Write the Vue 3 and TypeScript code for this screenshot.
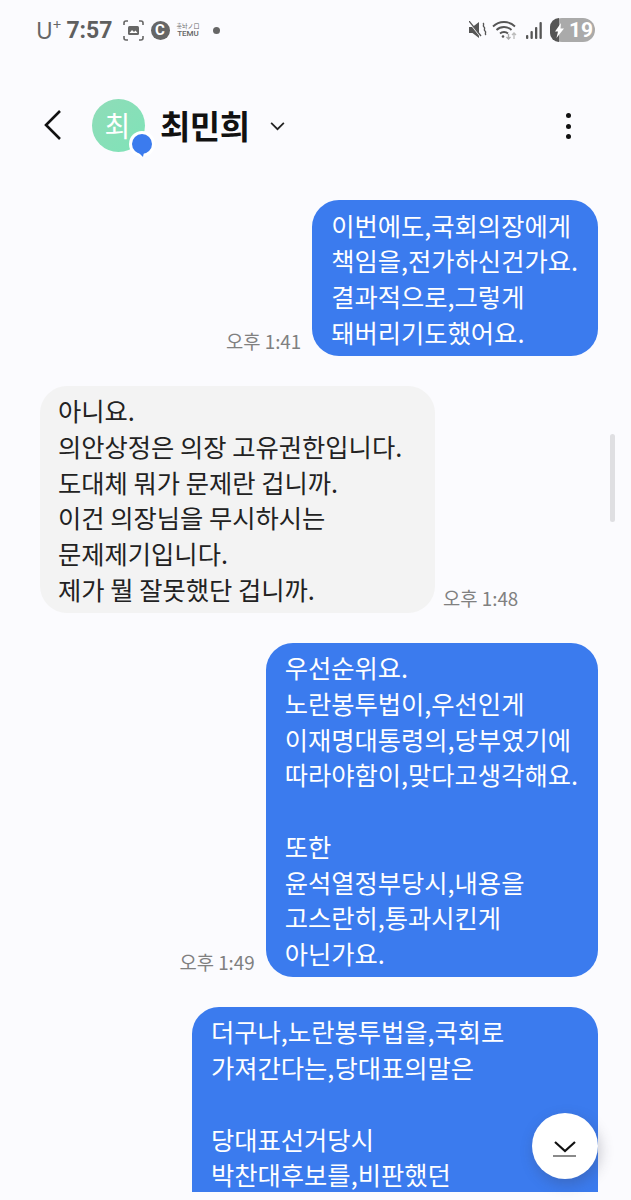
<script setup lang="ts">
interface Message {
  id: number
  mine: boolean
  time: string
  lines: string[]
  cut?: boolean
}

const messages: Message[] = [
  { id: 1, mine: true, time: '오후 1:41', lines: ['이번에도,국회의장에게', '책임을,전가하신건가요.', '결과적으로,그렇게', '돼버리기도했어요.'] },
  { id: 2, mine: false, time: '오후 1:48', lines: ['아니요.', '의안상정은 의장 고유권한입니다.', '도대체 뭐가 문제란 겁니까.', '이건 의장님을 무시하시는', '문제제기입니다.', '제가 뭘 잘못했단 겁니까.'] },
  { id: 3, mine: true, time: '오후 1:49', lines: ['우선순위요.', '노란봉투법이,우선인게', '이재명대통령의,당부였기에', '따라야함이,맞다고생각해요.', '', '또한', '윤석열정부당시,내용을', '고스란히,통과시킨게', '아닌가요.'] },
  { id: 4, mine: true, time: '', cut: true, lines: ['더구나,노란봉투법을,국회로', '가져간다는,당대표의말은', '', '당대표선거당시', '박찬대후보를,비판했던'] },
]
</script>

<template>
  <div class="phone">
    <div class="status">
      <div class="status-left">
        <span class="carrier">U<sup>+</sup></span>
        <span class="clock">7:57</span>
        <svg class="ic-shot" width="21" height="21" viewBox="0 0 21 21" fill="none" stroke="#666" stroke-width="1.6">
          <path d="M1 5V3a2 2 0 0 1 2-2h2M16 1h2a2 2 0 0 1 2 2v2M20 16v2a2 2 0 0 1-2 2h-2M5 20H3a2 2 0 0 1-2-2v-2" />
          <rect x="5" y="6" width="11" height="9" rx="1.5" fill="#666" stroke="none" />
          <path d="M6.5 13l2.5-3 2 2 1.5-1.500 2 2.500z" fill="#fff" stroke="none" />
        </svg>
        <span class="c-badge">C</span>
        <span class="temu"><i>홍놔ノ口</i><b>TEMU</b></span>
        <span class="dot"></span>
      </div>
      <div class="status-right">
        <svg class="mute" width="18" height="18" viewBox="0 0 18 18" fill="#555">
          <path d="M0 6h3.500L10 1v16l-6.500-5H0z" />
          <path d="M0 1l12 15" stroke="#fbfbfe" stroke-width="1.500" />
          <path d="M0 0l12 15" stroke="#555" stroke-width="1.300" />
          <path d="M14 2c2 1.500-1 2.500 1 4s-1 2.500 1 4-1 2.500 1 4" fill="none" stroke="#555" stroke-width="1.400" />
        </svg>
        <svg width="25" height="20" viewBox="0 0 25 20" fill="none" stroke="#555" stroke-width="1.800">
          <path d="M1 6.500c6-6 16-6 22 0M4.500 10c4-4 11-4 15 0M8 13.500c2.200-2 5.800-2 8 0" />
          <circle cx="11" cy="16.500" r="1.300" fill="#555" stroke="none" />
          <path d="M16.500 14v5M14.500 17l2 2 2-2" stroke="#aaa" stroke-width="1.300" />
          <path d="M22 19v-6M20 15l2-2 2 2" stroke="#bbb" stroke-width="1.300" />
        </svg>
        <svg class="signal" width="16" height="17" viewBox="0 0 16 17" fill="#555">
          <rect x="0" y="13" width="2.300" height="4" rx="1" />
          <rect x="4.500" y="9" width="2.300" height="8" rx="1" />
          <rect x="9" y="5" width="2.300" height="12" rx="1" />
          <rect x="13.500" y="0" width="2.300" height="17" rx="1" />
        </svg>
        <span class="battery">
          <span class="battery-fill"></span>
          <svg class="bolt" width="9" height="15" viewBox="0 0 9 15" fill="#fff"><path d="M6 0L0 8.500h3L1.500 15 9 5.500H5.500z" /></svg>
          <span class="battery-num">19</span>
        </span>
      </div>
    </div>

    <header class="head">
      <svg class="back" width="20" height="32" viewBox="0 0 20 32" fill="none" stroke="#111" stroke-width="2.600">
        <path d="M17 2L3 16l14 14" />
      </svg>
      <div class="avatar">
        <span>최</span>
        <svg class="avatar-badge" width="26" height="28" viewBox="0 0 26 28">
          <circle cx="13" cy="13" r="13" fill="#fff" />
          <circle cx="13" cy="13" r="10" fill="#3b7bee" />
          <path d="M9 21l5 5 1-5z" fill="#3b7bee" />
        </svg>
      </div>
      <span class="name">최민희</span>
      <svg class="chev" width="17" height="10" viewBox="0 0 18 11" fill="none" stroke="#222" stroke-width="1.900">
        <path d="M2 2l7 7 7-7" />
      </svg>
      <div class="more"><i></i><i></i><i></i></div>
    </header>

    <main class="thread">
      <div v-for="m in messages" :key="m.id" class="row" :class="{ mine: m.mine }">
        <span v-if="m.time" class="time">{{ m.time }}</span>
        <div class="bubble" :class="{ cut: m.cut }">
          <div v-for="(l, i) in m.lines" :key="i" class="line">{{ l }}</div>
        </div>
      </div>
    </main>

    <div class="scrollbar"></div>
    <button class="jump">
      <svg width="24" height="18" viewBox="0 0 24 18" fill="none">
        <path d="M2 2l10 9 10-9" stroke="#111" stroke-width="2.200" />
        <path d="M0 16h23" stroke="#8a8a8a" stroke-width="2" />
      </svg>
    </button>
  </div>
</template>

<style>
html, body { margin: 0; background: #fbfbfe; }
</style>

<style scoped>
.phone {
  position: relative;
  width: 631px;
  height: 1200px;
  overflow: hidden;
  background: #fbfbfe;
  font-family: "Noto Sans CJK KR", "Noto Sans", sans-serif;
}
.status {
  height: 60px;
  display: flex;
  align-items: center;
  justify-content: space-between;
  padding: 0 36px 0 36px;
  color: #666;
}
.status-left, .status-right { display: flex; align-items: center; }
.carrier { font: 400 23px "Noto Sans", sans-serif; position: relative; }
.carrier sup { font-size: 15px; line-height: 0; vertical-align: 9px; }
.clock { font: 700 23px "Roboto", sans-serif; margin-left: 5px; color: #5f5f5f; }
.ic-shot { margin-left: 10px; }
.c-badge {
  width: 19px;
  height: 19px;
  margin-left: 7px;
  border-radius: 50%;
  background: #666;
  color: #fff;
  font: 700 15px/19px "Roboto", sans-serif;
  text-align: center;
}
.temu { margin-left: 7px; display: flex; flex-direction: column; align-items: center; color: #666; line-height: 1; }
.temu i { font-style: normal; font-size: 6px; line-height: 7px; }
.temu b { font: 500 8px/9px "Roboto", sans-serif; }
.dot { width: 7px; height: 7px; margin-left: 13px; border-radius: 50%; background: #666; }
.status-right { gap: 8px; }
.mute { margin-right: -3px; }
.signal { margin-left: 1px; }
.battery {
  position: relative;
  width: 45px;
  height: 24px;
  border-radius: 12px;
  background: #aaa;
  display: flex;
  align-items: center;
}
.battery-fill {
  width: 9px;
  height: 24px;
  background: #555;
  border-radius: 12px 0 0 12px;
}
.bolt { position: absolute; left: 5px; top: 5px; }
.battery-num { font: 700 21px "Roboto", sans-serif; color: #fff; margin-left: 10px; }

.head {
  height: 113px;
  display: flex;
  align-items: center;
  padding: 17px 0 0 43px;
  box-sizing: border-box;
  position: relative;
}
.avatar {
  position: relative;
  width: 53px;
  height: 53px;
  margin-left: 29px;
  border-radius: 50%;
  background: linear-gradient(135deg, #8fdcb8, #7fe3b8);
  color: #fff;
  font-size: 28px;
  display: flex;
  align-items: center;
  justify-content: center;
}
.avatar span { margin-left: -2px; }
.avatar-badge { position: absolute; right: -10px; bottom: -7px; }
.name { margin-left: 15px; font-size: 33px; font-weight: 700; color: #111; letter-spacing: -0.5px; }
.chev { margin-left: 19px; margin-top: 1px; }
.more {
  position: absolute;
  right: 60px;
  top: 53px;
  display: flex;
  flex-direction: column;
  gap: 5.500px;
}
.more i { width: 5px; height: 5px; border-radius: 50%; background: #111; display: block; }

.thread {
  display: flex;
  flex-direction: column;
  gap: 29.500px;
  padding: 27px 33px 0 40px;
}
.row { display: flex; align-items: flex-end; flex-direction: row-reverse; justify-content: flex-end; gap: 8px; }
.row.mine { flex-direction: row; justify-content: flex-end; gap: 11px; }
.time { font-size: 18.800px; color: #808080; line-height: 22px; padding-bottom: 4px; white-space: nowrap; }
.bubble {
  background: #f3f3f3;
  color: #222;
  border-radius: 27px;
  min-width: 357px;
  padding: 7.500px 20px 5.500px 18px;
  font-size: 25.300px;
  line-height: 35.750px;
  white-space: nowrap;
}
.mine .bubble { background: #3b7bee; color: #fff; min-width: 0; padding-left: 19px; }
.mine .bubble.cut { min-width: 367px; height: 178px; border-radius: 27px 27px 0 0; padding-bottom: 0; }
.line { min-height: 35.750px; }

.scrollbar {
  position: absolute;
  left: 610px;
  top: 434px;
  width: 5px;
  height: 88px;
  border-radius: 3px;
  background: #dfdfe2;
}
.jump {
  position: absolute;
  left: 532px;
  top: 1113px;
  width: 66px;
  height: 66px;
  padding: 6px 0 0;
  border: 0;
  border-radius: 50%;
  background: #fff;
  box-shadow: 2px 5px 14px rgba(60, 60, 80, 0.28);
  display: flex;
  align-items: center;
  justify-content: center;
}
</style>
